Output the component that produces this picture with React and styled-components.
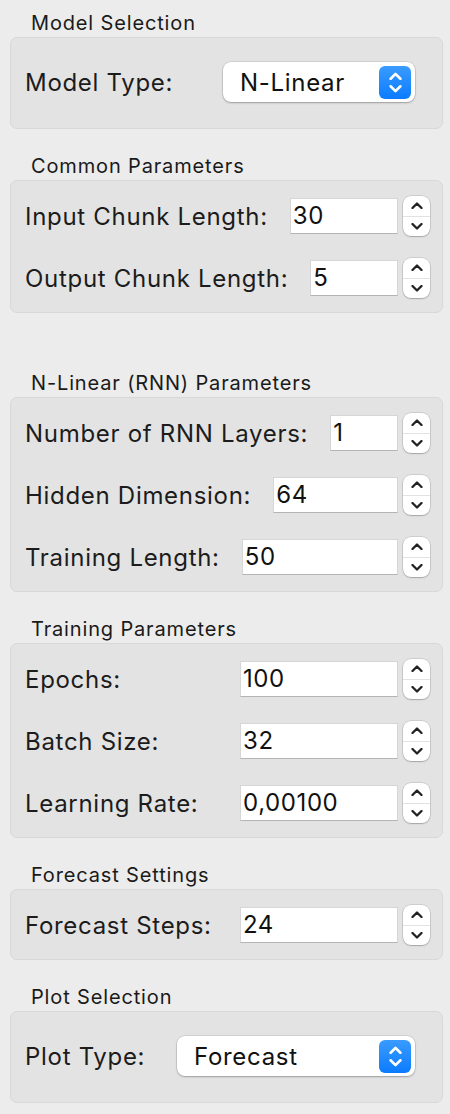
import React from "react";
import styled, { createGlobalStyle } from "styled-components";

const Global = createGlobalStyle`
  html, body { margin: 0; padding: 0; background: #ececec; }
  body { font-family: Inter, "Liberation Sans", Arial, sans-serif; color: #1c1c1c; }
  * { box-sizing: border-box; }
`;

const Page = styled.div`
  width: 450px;
  min-height: 1114px;
  background: #ececec;
  padding: 11px 7px 0 10px;
  display: flex;
  flex-direction: column;
`;

const Section = styled.section`
  display: flex;
  flex-direction: column;
  margin-top: ${(p) => p.$gap || 0}px;
`;

const Title = styled.div`
  font-size: 20px;
  letter-spacing: 0.85px;
  line-height: 24px;
  height: 24px;
  padding-left: 21px;
  margin-bottom: 2px;
  color: #1a1a1a;
`;

const Box = styled.div`
  background: #e3e3e3;
  border: 1px solid #d8d8d8;
  border-radius: 7px;
  padding: ${(p) => (p.$popup ? "24px 13px 26px 14px" : "15px 12px 14px 14px")};
  display: flex;
  flex-direction: column;
  gap: 22px;
`;

const Row = styled.div`
  display: flex;
  align-items: center;
  height: 40px;
`;

const Label = styled.span`
  flex: 0 0 auto;
  font-size: 24px;
  letter-spacing: 0.7px;
  margin-right: 22px;
  white-space: nowrap;
`;

const Field = styled.div`
  flex: 1 1 auto;
  max-width: 158px;
  margin-left: auto;
  height: 36px;
  background: #fff;
  border: 1px solid #d6d6d6;
  border-bottom-color: #b4b4b4;
  font-size: 24px;
  letter-spacing: 0.6px;
  line-height: 34px;
  padding-left: 2px;
  color: #111;
`;

const Stepper = styled.div`
  flex: 0 0 27px;
  width: 27px;
  height: 40px;
  margin-left: 5px;
  background: #fff;
  border-radius: 8px;
  box-shadow: 0 0 0 0.5px rgba(0, 0, 0, 0.18), 0 1px 1.5px rgba(0, 0, 0, 0.2);
  display: flex;
  flex-direction: column;
`;

const StepHalf = styled.div`
  flex: 1;
  display: flex;
  align-items: center;
  justify-content: center;
  border-top: ${(p) => (p.$bottom ? "1px solid #e2e2e2" : "none")};
`;

const Popup = styled.div`
  margin-left: auto;
  margin-right: 14px;
  width: ${(p) => p.$w}px;
  height: 40px;
  background: #fff;
  border-radius: 8px;
  box-shadow: 0 0 0 0.5px rgba(0, 0, 0, 0.15), 0 1px 2px rgba(0, 0, 0, 0.25);
  display: flex;
  align-items: center;
  padding: 0 4px 0 17px;
`;

const PopupText = styled.span`
  flex: 1;
  font-size: 24px;
  letter-spacing: 0.7px;
  color: #111;
`;

const BlueButton = styled.div`
  width: 32px;
  height: 33px;
  border-radius: 6px;
  background: linear-gradient(#3a9bff, #0b7cff);
  display: flex;
  align-items: center;
  justify-content: center;
`;

const Chevron = ({ up, color = "#222", w = 12, h = 7, sw = 2.3 }) => (
  <svg width={w} height={h} viewBox="0 0 12 7" fill="none">
    <path
      d={up ? "M1.5 6 L6 1.5 L10.5 6" : "M1.5 1 L6 5.5 L10.5 1"}
      stroke={color}
      strokeWidth={sw}
      strokeLinecap="round"
      strokeLinejoin="round"
    />
  </svg>
);

const UpDown = styled.div`
  display: flex;
  flex-direction: column;
  align-items: center;
  gap: 5px;
`;

const SpinRow = ({ label, value }) => (
  <Row>
    <Label>{label}</Label>
    <Field>{value}</Field>
    <Stepper>
      <StepHalf>
        <Chevron up />
      </StepHalf>
      <StepHalf $bottom>
        <Chevron />
      </StepHalf>
    </Stepper>
  </Row>
);

const PopupRow = ({ label, value, w }) => (
  <Row>
    <Label>{label}</Label>
    <Popup $w={w}>
      <PopupText>{value}</PopupText>
      <BlueButton>
        <UpDown>
          <Chevron up color="#fff" w={13} h={8} sw={2.4} />
          <Chevron color="#fff" w={13} h={8} sw={2.4} />
        </UpDown>
      </BlueButton>
    </Popup>
  </Row>
);

export default function App() {
  return (
    <>
      <Global />
      <Page>
        <Section>
          <Title>Model Selection</Title>
          <Box $popup>
            <PopupRow label="Model Type:" value="N-Linear" w={192} />
          </Box>
        </Section>

        <Section $gap={25}>
          <Title>Common Parameters</Title>
          <Box>
            <SpinRow label="Input Chunk Length:" value="30" />
            <SpinRow label="Output Chunk Length:" value="5" />
          </Box>
        </Section>

        <Section $gap={58}>
          <Title>N-Linear (RNN) Parameters</Title>
          <Box>
            <SpinRow label="Number of RNN Layers:" value="1" />
            <SpinRow label="Hidden Dimension:" value="64" />
            <SpinRow label="Training Length:" value="50" />
          </Box>
        </Section>

        <Section $gap={25}>
          <Title>Training Parameters</Title>
          <Box>
            <SpinRow label="Epochs:" value="100" />
            <SpinRow label="Batch Size:" value="32" />
            <SpinRow label="Learning Rate:" value="0,00100" />
          </Box>
        </Section>

        <Section $gap={25}>
          <Title>Forecast Settings</Title>
          <Box>
            <SpinRow label="Forecast Steps:" value="24" />
          </Box>
        </Section>

        <Section $gap={25}>
          <Title>Plot Selection</Title>
          <Box $popup>
            <PopupRow label="Plot Type:" value="Forecast" w={238} />
          </Box>
        </Section>
      </Page>
    </>
  );
}
